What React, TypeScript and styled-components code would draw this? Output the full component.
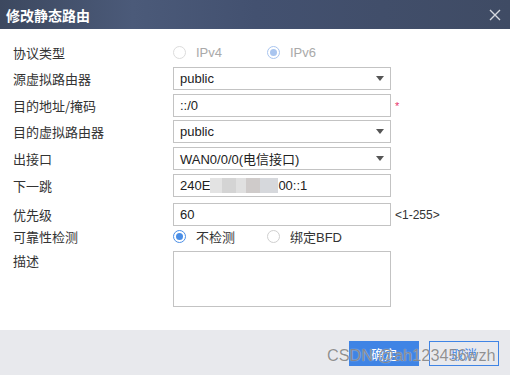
import React from "react";
import styled, { createGlobalStyle } from "styled-components";

const Global = createGlobalStyle`
  html, body { margin: 0; padding: 0; background: #fff; }
  body { font-family: "Liberation Sans", "Noto Sans CJK SC", Arial, sans-serif; font-size: 13px; color: #333; }
  * { box-sizing: border-box; }
`;

const Dialog = styled.div`
  width: 510px;
  height: 375px;
  display: flex;
  flex-direction: column;
  position: relative;
  overflow: hidden;
`;

const TitleBar = styled.div`
  height: 29px;
  flex: none;
  display: flex;
  align-items: center;
  justify-content: space-between;
  padding: 0 9px 0 6px;
  background: linear-gradient(90deg, #3c485f 0%, #4b5a79 26%, #435170 50%, #3f4b64 100%);
`;

const Title = styled.div`
  color: #fff;
  font-weight: bold;
  font-size: 14px;
  font-family: "Noto Sans CJK SC", sans-serif;
`;

const Body = styled.div`
  flex: 1;
  padding: 12px 0 0 13px;
  display: flex;
  flex-direction: column;
`;

const Row = styled.div<{ $mt: number; $h: number; $top?: boolean }>`
  display: flex;
  align-items: ${(p) => (p.$top ? "flex-start" : "center")};
  margin-top: ${(p) => p.$mt}px;
  height: ${(p) => p.$h}px;
`;

const Label = styled.div`
  width: 160px;
  flex: none;
  color: #333;
  font-size: 13px;
  font-family: "Noto Sans CJK SC", sans-serif;
`;

const Field = styled.div`
  width: 218px;
  height: 23px;
  border: 1px solid #c3c3c3;
  display: flex;
  align-items: center;
  padding: 0 6px;
  color: #222;
  font-size: 13px;
  background: #fff;
`;

const Arrow = styled.span`
  margin-left: auto;
  width: 0;
  height: 0;
  border-left: 4.5px solid transparent;
  border-right: 4.5px solid transparent;
  border-top: 5px solid #555;
`;

const Area = styled.div`
  width: 218px;
  height: 56px;
  border: 1px solid #c3c3c3;
  background: #fff;
`;

const Suffix = styled.span<{ $color: string; $size: number }>`
  margin-left: 4px;
  color: ${(p) => p.$color};
  font-size: ${(p) => p.$size}px;
`;

const Radios = styled.div`
  display: flex;
  align-items: center;
`;

const RadioItem = styled.label<{ $w: number; $disabled?: boolean }>`
  display: flex;
  align-items: center;
  width: ${(p) => p.$w}px;
  color: ${(p) => (p.$disabled ? "#a9a9a9" : "#333")};
  font-size: 13px;
  font-family: "Liberation Sans", "Noto Sans CJK SC", sans-serif;
`;

const Circle = styled.span<{ $ring: string; $dot?: string }>`
  width: 13px;
  height: 13px;
  border-radius: 50%;
  border: 1px solid ${(p) => p.$ring};
  margin-right: 10px;
  display: flex;
  align-items: center;
  justify-content: center;
  background: #fff;
  &::after {
    content: "";
    width: 7px;
    height: 7px;
    border-radius: 50%;
    background: ${(p) => p.$dot ?? "transparent"};
  }
`;

const Blur = styled.span<{ $c: string; $w: number }>`
  display: inline-block;
  width: ${(p) => p.$w}px;
  height: 15px;
  background: ${(p) => p.$c};
`;

const Footer = styled.div`
  height: 45px;
  flex: none;
  background: #e8e9ed;
  display: flex;
  align-items: flex-start;
  justify-content: flex-end;
  padding: 11px 11px 0 0;
  gap: 10px;
`;

const Button = styled.button<{ $primary?: boolean }>`
  width: 70px;
  height: 25px;
  font-size: 13px;
  font-family: "Noto Sans CJK SC", sans-serif;
  border: 1px solid #3f84e5;
  background: ${(p) => (p.$primary ? "#3f84e5" : "transparent")};
  color: ${(p) => (p.$primary ? "#fff" : "#3f84e5")};
  padding: 0;
  line-height: 23px;
`;

const Watermark = styled.div`
  position: absolute;
  left: 327px;
  top: 346px;
  font-size: 16.3px;
  color: rgba(110, 110, 110, 0.75);
  font-family: "Liberation Sans", Arial, sans-serif;
  text-shadow: 0 0 1px rgba(255, 255, 255, 0.8);
  pointer-events: none;
`;

const CloseIcon = () => (
  <svg width="12" height="12" viewBox="0 0 12 12">
    <path d="M1 1L11 11M11 1L1 11" stroke="#d6d9e0" strokeWidth="1.4" />
  </svg>
);

export default function App() {
  return (
    <>
      <Global />
      <Dialog>
        <TitleBar>
          <Title>修改静态路由</Title>
          <CloseIcon />
        </TitleBar>
        <Body>
          <Row $mt={0} $h={22}>
            <Label>协议类型</Label>
            <Radios>
              <RadioItem $w={94} $disabled>
                <Circle $ring="#dcdcdc" />
                IPv4
              </RadioItem>
              <RadioItem $w={80} $disabled>
                <Circle $ring="#a9c5ef" $dot="#a9c5ef" />
                IPv6
              </RadioItem>
            </Radios>
          </Row>
          <Row $mt={4} $h={23}>
            <Label>源虚拟路由器</Label>
            <Field>
              public
              <Arrow />
            </Field>
          </Row>
          <Row $mt={4} $h={23}>
            <Label>目的地址/掩码</Label>
            <Field>::/0</Field>
            <Suffix $color="#e8356b" $size={11}>*</Suffix>
          </Row>
          <Row $mt={3} $h={23}>
            <Label>目的虚拟路由器</Label>
            <Field>
              public
              <Arrow />
            </Field>
          </Row>
          <Row $mt={4} $h={23}>
            <Label>出接口</Label>
            <Field>
              WAN0/0/0(电信接口)
              <Arrow />
            </Field>
          </Row>
          <Row $mt={4} $h={23}>
            <Label>下一跳</Label>
            <Field>
              240E
              <Blur $c="#e3e3e3" $w={12} />
              <Blur $c="#d4d4d4" $w={14} />
              <Blur $c="#e0e0e0" $w={10} />
              <Blur $c="#cfcbca" $w={14} />
              <Blur $c="#d6d8dc" $w={18} />
              00::1
            </Field>
          </Row>
          <Row $mt={6} $h={23}>
            <Label>优先级</Label>
            <Field>60</Field>
            <Suffix $color="#333" $size={12}>&lt;1-255&gt;</Suffix>
          </Row>
          <Row $mt={0} $h={21}>
            <Label>可靠性检测</Label>
            <Radios>
              <RadioItem $w={94}>
                <Circle $ring="#4a8ee6" $dot="#4a8ee6" />
                不检测
              </RadioItem>
              <RadioItem $w={100}>
                <Circle $ring="#cfcfcf" />
                绑定BFD
              </RadioItem>
            </Radios>
          </Row>
          <Row $mt={4} $h={56} $top>
            <Label>描述</Label>
            <Area />
          </Row>
        </Body>
        <Footer>
          <Button $primary>确定</Button>
          <Button>取消</Button>
        </Footer>
        <Watermark>CSDN @ah123456wzh</Watermark>
      </Dialog>
    </>
  );
}
